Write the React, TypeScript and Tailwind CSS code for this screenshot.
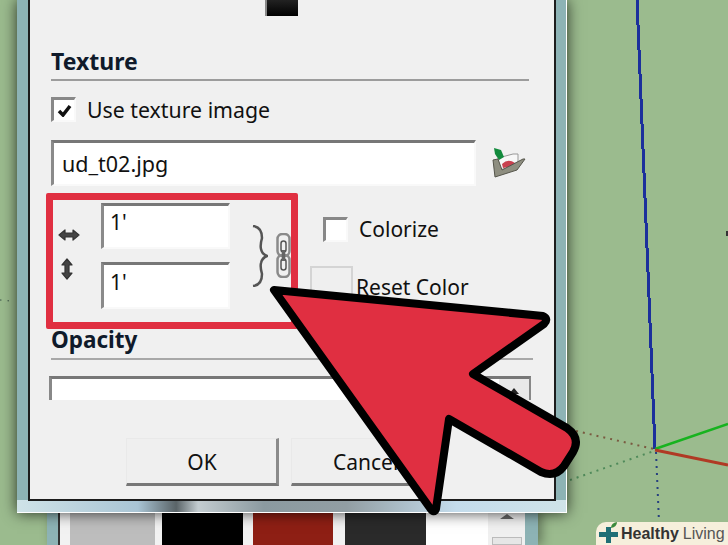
import React from 'react';

const bevelInput = 'bg-white border-t-[3px] border-l-[3px] border-r-2 border-b-2 border-t-[#777] border-l-[#8a8a8a] border-r-[#f9f9f9] border-b-[#f9f9f9]';
const uiFont = "font-['Noto_Sans',sans-serif]";

const Desktop: React.FC = () => (
  <svg className="absolute inset-0" width="728" height="545" viewBox="0 0 728 545" fill="none">
    <path d="M637 0 L648 272 L655 449" stroke="#1b2f9c" strokeWidth="3" shapeRendering="crispEdges" />
    <path d="M655 449 L728 424" stroke="#17b31f" strokeWidth="2.5" />
    <path d="M655 450 L728 465" stroke="#b03a24" strokeWidth="3" />
    <path d="M576 431 L654 449" stroke="#7a5a40" strokeWidth="2" strokeDasharray="2 5" />
    <path d="M570 480 L654 451" stroke="#4f8a5a" strokeWidth="2" strokeDasharray="2 5" />
    <path d="M656 452 L659 522" stroke="#27407f" strokeWidth="2" strokeDasharray="2 5" />
    <path d="M0 300 L12 301" stroke="#54705a" strokeWidth="1.5" strokeDasharray="1.5 6" />
    <rect x="726" y="231" width="2" height="5" fill="#333" />
  </svg>
);

const LowerWindow: React.FC = () => (
  <div className="absolute left-[47px] top-[510px] flex h-[35px] w-[491px] bg-[#8db3b5] pl-[11px] pr-[13px] shadow-[4px_0_10px_rgba(0,0,0,0.35)]">
    <div className="flex flex-1 border-l-2 border-[#333] bg-[#f2f2f2]">
      <div className="ml-[10px] w-[85px] bg-[#bdbdbd]" />
      <div className="ml-[7px] w-[81px] bg-black" />
      <div className="ml-[10px] w-[80px] bg-[#8e1f14]" />
      <div className="ml-[12px] w-[81px] bg-[#2a2a2a]" />
      <div className="flex flex-1 justify-end bg-white">
        <div className="flex w-[37px] flex-col items-center bg-[#f0f0f0] pt-[4px]">
          <div className="h-0 w-0 border-x-[7px] border-b-[5px] border-x-transparent border-b-[#666]" />
          <div className="mt-[18px] h-[10px] w-[30px] border border-[#bbb] bg-[#e6e6e6]" />
        </div>
      </div>
    </div>
  </div>
);

const ArrowH = () => (
  <svg width="22" height="12" viewBox="0 0 22 12" fill="#444" stroke="#333" strokeWidth="1.2" strokeLinejoin="round">
    <path d="M1 6 L7 1 V4 H15 V1 L21 6 L15 11 V8 H7 V11 Z" />
  </svg>
);

const ArrowV = () => (
  <svg width="12" height="22" viewBox="0 0 12 22" fill="#444" stroke="#333" strokeWidth="1.2" strokeLinejoin="round">
    <path d="M6 1 L11 7 H8 V15 H11 L6 21 L1 15 H4 V7 H1 Z" />
  </svg>
);

const FolderIcon = () => (
  <svg width="36" height="34" viewBox="0 0 36 34">
    <path d="M7 12 L22 8 L27 8 L27 20 L7 24 Z" fill="#f7f7f7" stroke="#999" />
    <path d="M11 18 Q17 12 24 17 L24 20 L12 22 Z" fill="#c8404f" />
    <path d="M3 2 L10 4 L13 11 L8 14 L4 8 Z" fill="#128a3c" />
    <path d="M2 14 L7 13 L11 24 L32 13 L34 13 L26 24 L4 31 Z" fill="#8e8e80" stroke="#55554b" />
  </svg>
);

const LinkIcon = () => (
  <svg width="15" height="45" viewBox="0 0 15 45" fill="none" className="shrink-0">
    <rect x="1.5" y="1" width="12" height="22" rx="5" stroke="#8a8a8a" strokeWidth="2.5" />
    <rect x="1.5" y="22" width="12" height="22" rx="5" stroke="#8a8a8a" strokeWidth="2.5" />
    <rect x="5" y="8" width="5" height="11" rx="2.5" stroke="#555" strokeWidth="1.5" />
    <rect x="5" y="26" width="5" height="11" rx="2.5" stroke="#555" strokeWidth="1.5" />
    <path d="M7.5 17 V28" stroke="#666" strokeWidth="3.5" />
  </svg>
);

const Brace = () => (
  <svg width="16" height="62" viewBox="0 0 16 62" fill="none" className="shrink-0">
    <path d="M1 1 Q10 2 10 13 Q8 20 9 24 Q10 29 15 31 Q10 33 9 38 Q8 42 10 49 Q10 60 1 61" stroke="#555" strokeWidth="2.5" />
  </svg>
);

const BigArrow = () => (
  <svg className="absolute inset-0" width="728" height="545" viewBox="0 0 728 545" fill="none">
    <path
      d="M274 290 L543 316 Q549 319 544 324 L473 374 L567 428 Q581 438 573 452 L564 466 Q555 478 541 472 L449 419 L436 509 Q434 514 430 508 Z"
      fill="#e02f41"
      stroke="#000"
      strokeWidth="8"
      strokeLinejoin="round"
    />
  </svg>
);

const HealthyBadge = () => (
  <div className="absolute bottom-0 right-0 flex h-[23px] w-[132px] items-center rounded-tl-[10px] bg-[#f6efdc] pl-[3px] font-['Liberation_Sans',sans-serif] text-[16px] leading-none text-[#333]">
    <svg width="19" height="23" viewBox="0 0 19 23" className="shrink-0">
      <path d="M7 5 H12 V10 H19 V15 H12 V21 H7 V15 H0 V10 H7 Z" fill="#1f6f76" />
      <path d="M12 6 Q12 1 18 0 Q18 5 12 6 Z" fill="#3c8a3c" />
    </svg>
    <span className="ml-[3px] font-bold">Healthy</span>
    <span className="ml-[4px] text-[#555]">Living</span>
  </div>
);

const App: React.FC = () => {
  return (
    <div className="relative h-[545px] w-[728px] overflow-hidden bg-[#9bbb8e]">
      <Desktop />
      <LowerWindow />

      {/* Dialog window */}
      <div className={`absolute left-[17px] top-0 h-[513px] w-[550px] border-b border-r border-b-[#fff] border-r-[#fff] bg-[#8db3b5] pl-[11px] pr-[10px] shadow-[0_0_14px_rgba(0,0,0,0.75)] ${uiFont}`}>
        <div className="absolute bottom-0 left-0 right-0 h-[12px] bg-[linear-gradient(90deg,#cfe3e8_0%,#a9c4d4_22%,#5a6468_29%,#c3ccd0_33%,#8b9aa0_45%,#929ea3_60%,#c4dcec_80%,#cfe3e8_100%)]" />
        <div className="relative flex h-[501px] flex-col border-b-2 border-l-2 border-r-2 border-[#1c1c1c] bg-[#f0f0f0] pl-[21px] pr-[23px] text-[#111]">
          <div className="ml-[214px] h-[16px] w-[33px] border-l-2 border-[#888] bg-[linear-gradient(180deg,#222,#000)]" />

          <h2 className="mt-[31px] h-[28px] text-[23px] font-bold leading-[28px] text-[#0f1a2a]">Texture</h2>
          <div className="mt-[4px] h-[2px] w-[478px] bg-[#9c9c9c]" />

          <div className="mt-[16px] flex h-[25px] items-center">
            <div className="flex h-[25px] w-[25px] items-center justify-center border-b-2 border-l-[3px] border-r-2 border-t-[3px] border-b-[#f9f9f9] border-l-[#888] border-r-[#f9f9f9] border-t-[#888] bg-white">
              <svg width="15" height="13" viewBox="0 0 15 13" fill="none">
                <path d="M2 7 L6 11 L13 2" stroke="#111" strokeWidth="3.5" />
              </svg>
            </div>
            <span className="ml-[11px] text-[21.3px] leading-none">Use texture image</span>
          </div>

          <div className="mt-[18px] flex items-center">
            <div className={`${bevelInput} flex h-[46px] w-[425px] items-center pl-[8px] text-[21.5px] leading-none`}>ud_t02.jpg</div>
            <div className="ml-[15px]"><FolderIcon /></div>
          </div>

          <div className="mt-[7px] flex">
            <div className="-ml-[5px] flex h-[136px] w-[252px] rounded-[2px] border-[7px] border-[#e02f41]">
              <div className="flex w-[48px] shrink-0 flex-col items-start pl-[5px] pt-[29px]">
                <ArrowH />
                <div className="ml-[3px] mt-[17px]"><ArrowV /></div>
              </div>
              <div className="flex shrink-0 flex-col gap-[13px] pt-[3px]">
                <div className={`${bevelInput} h-[46px] w-[129px] pl-[6px] pt-[2px] text-[21px] leading-[28px]`}>1'</div>
                <div className={`${bevelInput} h-[47px] w-[129px] pl-[6px] pt-[3px] text-[21px] leading-[28px]`}>1'</div>
              </div>
              <div className="ml-[22px] flex shrink-0 items-start gap-[8px] pt-[25px]">
                <Brace />
                <div className="pt-[8px]"><LinkIcon /></div>
              </div>
            </div>
            <div className="ml-[12px] flex flex-col">
              <div className="ml-[13px] mt-[24px] flex h-[25px] items-center">
                <div className="h-[25px] w-[25px] border-b-2 border-l-[3px] border-r-2 border-t-[3px] border-b-[#f9f9f9] border-l-[#888] border-r-[#f9f9f9] border-t-[#888] bg-white" />
                <span className="ml-[11px] text-[21px] leading-none">Colorize</span>
              </div>
              <div className="mt-[24px] flex h-[44px] items-start">
                <div className="h-[44px] w-[43px] border-2 border-[#d4d4d4] bg-[#efefef]" />
                <span className="ml-[3px] mt-[11px] text-[21px] leading-none">Reset Color</span>
              </div>
            </div>
          </div>

          <h2 className="mt-[-3px] h-[28px] text-[22.5px] font-bold leading-[28px] text-[#0f1a2a]">Opacity</h2>
          <div className="mt-[4px] h-[2px] w-[482px] bg-[#a8a8a8]" />

          <div className="-ml-[2px] mt-[16px] flex h-[24px] w-[482px] border-l-[3px] border-r-2 border-t-[3px] border-l-[#888] border-r-[#888] border-t-[#777] bg-white">
            <div className="ml-auto flex w-[30px] justify-center bg-[#e9e9e9] pt-[9px]">
              <div className="h-0 w-0 border-x-[5px] border-b-[6px] border-x-transparent border-b-[#222]" />
            </div>
          </div>

          <div className="mt-[38px] flex pl-[75px]">
            <button className="h-[48px] w-[153px] border-b-[3px] border-l border-r-[3px] border-t border-b-[#777] border-l-[#e9e9e9] border-r-[#8a8a8a] border-t-[#e9e9e9] bg-[#efefef] pl-[1px] pt-[2px] text-[21px] leading-none text-[#111]">OK</button>
            <button className="ml-[12px] h-[48px] w-[150px] border-b-[3px] border-l border-r-[3px] border-t border-b-[#777] border-l-[#e9e9e9] border-r-[#8a8a8a] border-t-[#e9e9e9] bg-[#efefef] pl-[41px] pt-[2px] text-left text-[21px] leading-none text-[#111]">Cancel</button>
          </div>
        </div>
      </div>

      <BigArrow />
      <HealthyBadge />
    </div>
  );
};

export default App;
